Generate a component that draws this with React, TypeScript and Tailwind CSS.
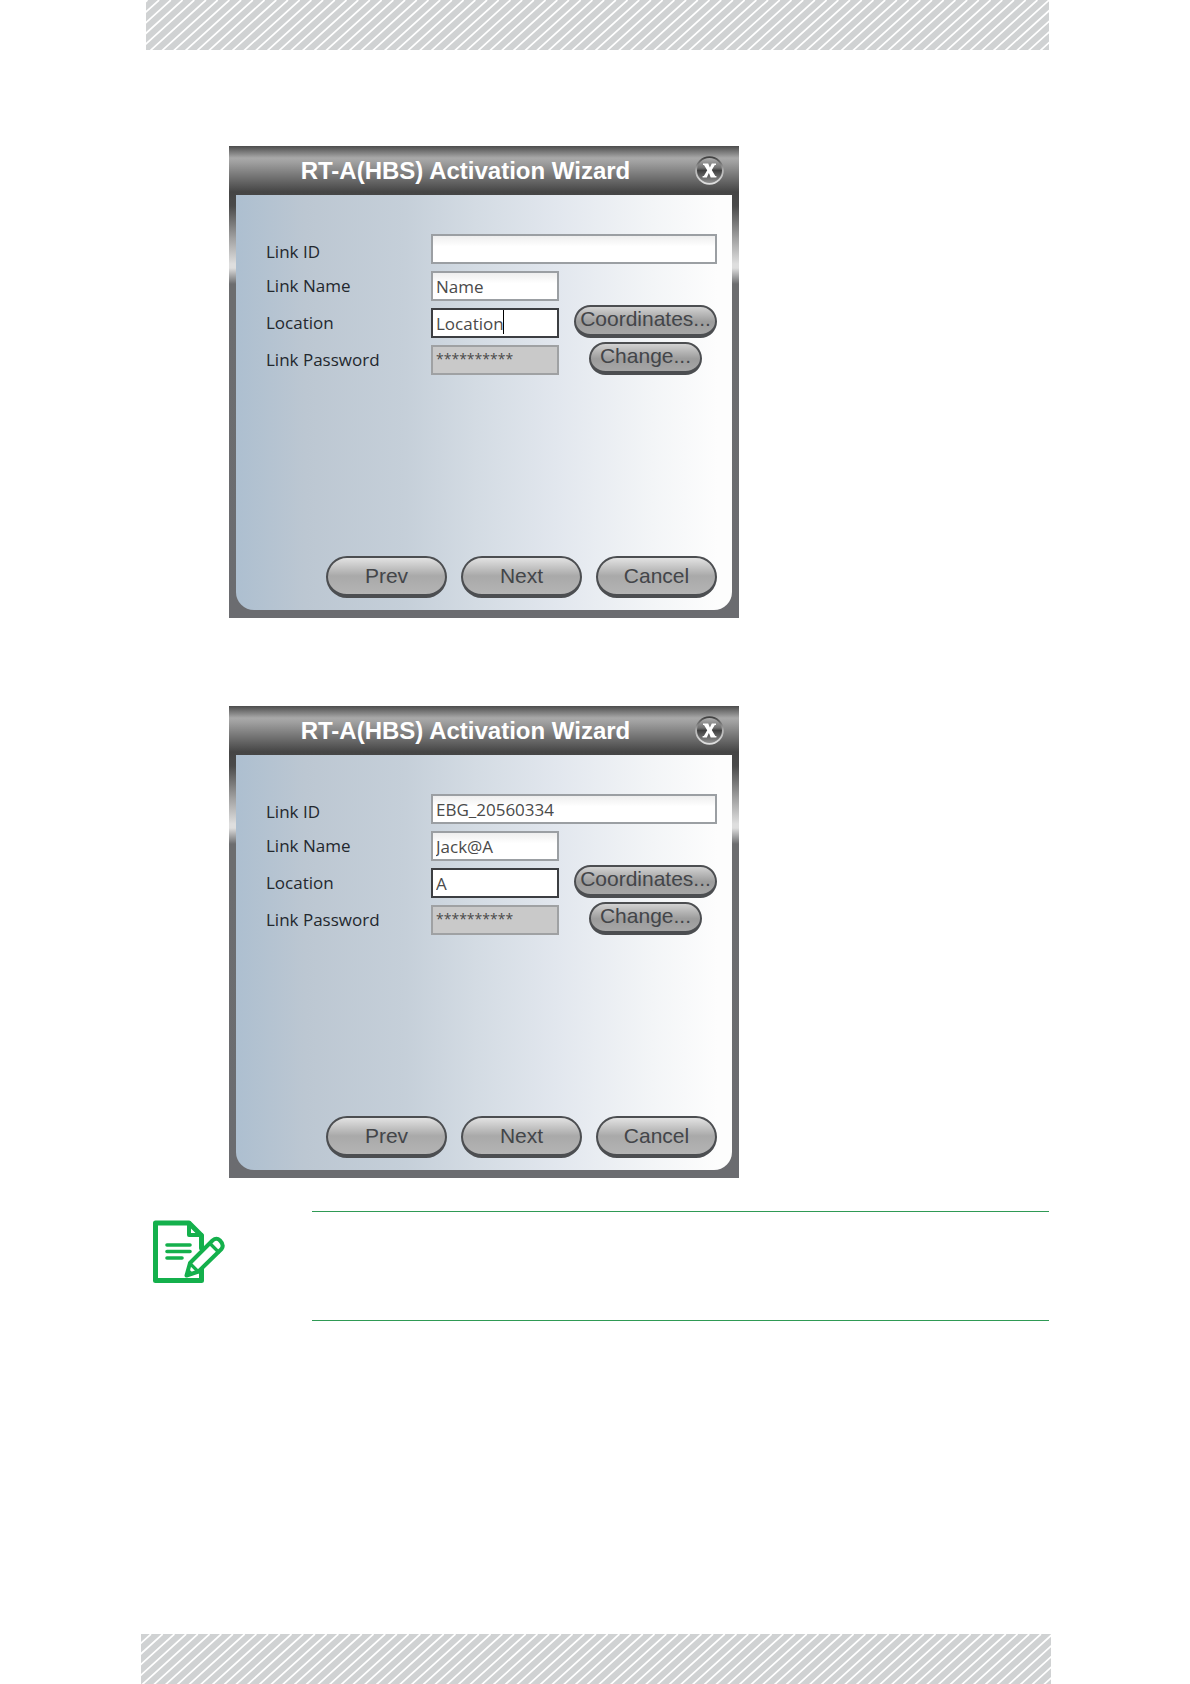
import React from "react";

const STRIPE_STEP = 11.71;
const STRIPE_RUN = 55;
const STRIPE_RISE = 50;

function StripeBand({ start, className }: { start: number; className: string }) {
  const lines = Array.from({ length: 240 }, (_, i) => {
    const x = start + (i - 8) * STRIPE_STEP;
    return `M${x - STRIPE_RUN} ${STRIPE_RISE * 2}L${x + STRIPE_RUN} 0`;
  }).join("");
  return (
    <div className={`h-[50px] shrink-0 overflow-hidden bg-[#d0d2d3] ${className}`}>
      <svg className="block h-full w-full" aria-hidden="true">
        <path d={lines} stroke="#ffffff" strokeWidth="1.7" fill="none" />
      </svg>
    </div>
  );
}

const labelClass = "w-[165px] shrink-0 text-[17px] leading-6 text-[#23282e]";
const inputBase = "h-[30px] border-2 px-[3px] text-[#4a4a4a] outline-none";
const inputText = "text-[17px] leading-6";
const inputNormal =
  "border-[#9b9fa3] bg-white bg-linear-to-b from-[#eeeeee] to-white to-40%";
const inputActive = "border-[#3c3e42] bg-white";
const inputDisabled = "border-[#9fa1a3] bg-[#c9c9c9] pb-1 text-[14px] leading-5";

const pillBase =
  "rounded-full border-2 border-b-4 border-[#4c4e51] text-[21px] text-[#434549] flex items-center justify-center whitespace-nowrap";
const pillLarge =
  "h-[42px] w-[121px] leading-8 bg-linear-to-b from-[#e2e2e2] via-[#a9a9a9] via-50% to-[#b4b4b4]";
const pillSmall =
  "h-[33px] leading-6 pb-1 bg-linear-to-b from-[#d2d2d2] via-[#9c9c9c] via-55% to-[#a6a6a6]";

type WizardProps = {
  id: string;
  linkId: string;
  linkName: string;
  location: string;
  caret?: boolean;
};

function Wizard({ id, linkId, linkName, location, caret }: WizardProps) {
  return (
    <section
      aria-labelledby={`${id}-title`}
      className="flex w-full max-w-[510px] flex-col bg-[linear-gradient(180deg,#4c4c4c_0px,#a9a9a9_12px,#a0a0a0_16px,#454545_46px,#4a4a4a_60px,#a0a0a0_92px,#dedede_118px,#dedede_122px,#6c6d6f_138px,#6b6c70_100%)] px-[7px] pb-2"
    >
      <header className="flex h-[49px] items-center pr-2">
        <h2
          id={`${id}-title`}
          className="flex-1 text-center text-[24px] leading-8 font-bold whitespace-nowrap text-white"
        >
          RT-A(HBS) Activation Wizard
        </h2>
        <button
          type="button"
          aria-label="Close"
          className="flex size-[29px] items-center justify-center rounded-full"
        >
          <svg viewBox="0 0 29 29" className="size-full">
            <defs>
              <linearGradient id={`${id}-ball`} x1="0" y1="0" x2="0" y2="1">
                <stop offset="0" stopColor="#b4b4b4" />
                <stop offset="0.4" stopColor="#707070" />
                <stop offset="0.5" stopColor="#404040" />
                <stop offset="1" stopColor="#959595" />
              </linearGradient>
              <linearGradient id={`${id}-ring`} x1="0" y1="0" x2="0" y2="1">
                <stop offset="0" stopColor="#3f3f3f" />
                <stop offset="0.5" stopColor="#b4b4b4" />
                <stop offset="1" stopColor="#e0e0e0" />
              </linearGradient>
            </defs>
            <circle
              cx="14.5"
              cy="14.5"
              r="13.4"
              fill={`url(#${id}-ball)`}
              stroke={`url(#${id}-ring)`}
              strokeWidth="1.8"
            />
            <path
              d="M8 7.400h5.200l1.700 4 1.900-4h4.200v1.500h-1.200l-3 5 3.500 6h1.100v1.500h-5.700l-1.800-4.300-2.100 4.300H7.600v-1.500h1.300l3.300-5.600-3.200-5.400h-1z"
              fill="#ffffff"
            />
          </svg>
        </button>
      </header>

      <form
        onSubmit={(e) => e.preventDefault()}
        className="flex min-h-[415px] flex-col justify-between rounded-b-[18px] bg-[linear-gradient(90deg,#adbfd0_0%,#bcc7d2_14%,#c5cfd9_34%,#d3dbe3_48%,#e2e7ee_65%,#f3f5f7_84%,#fdfdfd_97%)] pt-[39px] pr-[15px] pb-3 pl-[30px]"
      >
        <div className="flex flex-col gap-[7px] font-['Open_Sans','Noto_Sans',sans-serif]">
          <div className="flex h-[30px] items-end">
            <label htmlFor={`${id}-link`} className={labelClass}>
              Link ID
            </label>
            <input
              id={`${id}-link`}
              defaultValue={linkId}
              className={`${inputBase} ${inputText} ${inputNormal} min-w-0 flex-1`}
            />
          </div>
          <div className="flex h-[30px] items-center">
            <label htmlFor={`${id}-name`} className={labelClass}>
              Link Name
            </label>
            <input
              id={`${id}-name`}
              defaultValue={linkName}
              className={`${inputBase} ${inputText} ${inputNormal} w-[128px]`}
            />
          </div>
          <div className="flex h-[30px] items-center">
            <label htmlFor={`${id}-location`} className={labelClass}>
              Location
            </label>
            <div className="relative w-[128px]">
              <input
                id={`${id}-location`}
                defaultValue={location}
                className={`${inputBase} ${inputText} ${inputActive} block w-full`}
              />
              {caret && (
                <span className="absolute top-[2px] left-[72px] h-6 w-px bg-black" />
              )}
            </div>
            <div className="flex flex-1 justify-end self-end font-['Liberation_Sans',Arial,sans-serif]">
              <button type="button" className={`${pillBase} ${pillSmall} w-[143px]`}>
                Coordinates...
              </button>
            </div>
          </div>
          <div className="flex h-[30px] items-center">
            <label htmlFor={`${id}-password`} className={labelClass}>
              Link Password
            </label>
            <input
              id={`${id}-password`}
              readOnly
              value="**********"
              className={`${inputBase} ${inputDisabled} w-[128px]`}
            />
            <div className="flex flex-1 justify-end self-end pr-[15px] font-['Liberation_Sans',Arial,sans-serif]">
              <button type="button" className={`${pillBase} ${pillSmall} w-[113px]`}>
                Change...
              </button>
            </div>
          </div>
        </div>

        <div className="flex justify-end gap-[14px]">
          <button type="button" className={`${pillBase} ${pillLarge}`}>
            Prev
          </button>
          <button type="button" className={`${pillBase} ${pillLarge}`}>
            Next
          </button>
          <button type="button" className={`${pillBase} ${pillLarge}`}>
            Cancel
          </button>
        </div>
      </form>
    </section>
  );
}

function NoteIcon() {
  return (
    <svg
      viewBox="0 0 74 64"
      className="h-16 w-[74px] shrink-0"
      fill="none"
      stroke="#14b04c"
      strokeLinecap="round"
      strokeLinejoin="round"
      aria-hidden="true"
    >
      <path d="M49.500 28V15.500L37 3H3.500V60.500H49.500V49" strokeWidth="5" />
      <path d="M37 3V15H49.500" strokeWidth="4" />
      <path d="M15 25H38M15 31.500H38M15 38H30" strokeWidth="3.600" />
      <path
        d="M34.500 55.500L38 43L60.500 20.500Q64.500 17 68 20.500Q72.500 25 69.500 29L46.500 51.500Z"
        fill="#ffffff"
        strokeWidth="4"
      />
      <path d="M58 23.500L66.500 32M38 43.500L46 51.500" strokeWidth="3.200" />
      <path d="M34.500 55.500L36 49.500L40.500 54Z" fill="#14b04c" strokeWidth="2" />
    </svg>
  );
}

export default function App() {
  return (
    <div className="flex min-h-screen flex-col bg-white font-['Liberation_Sans',Arial,sans-serif]">
      <StripeBand start={5} className="mr-[141px] ml-[146px]" />
      <main className="mr-[141px] flex-1 pt-24 pb-8 pl-[146px]">
        <div className="flex flex-col gap-[88px] pl-[83px]">
          <Wizard id="blank" linkId="" linkName="Name" location="Location" caret />
          <Wizard id="filled" linkId="EBG_20560334" linkName="Jack@A" location="A" />
        </div>
        <aside className="mt-[33px] flex pl-[6px]">
          <div className="w-[160px] shrink-0 pt-[9px]">
            <NoteIcon />
          </div>
          <div className="h-[110px] flex-1 border-y border-[#2f9a55]" />
        </aside>
      </main>
      <StripeBand start={-45} className="mr-[139px] ml-[141px]" />
    </div>
  );
}
